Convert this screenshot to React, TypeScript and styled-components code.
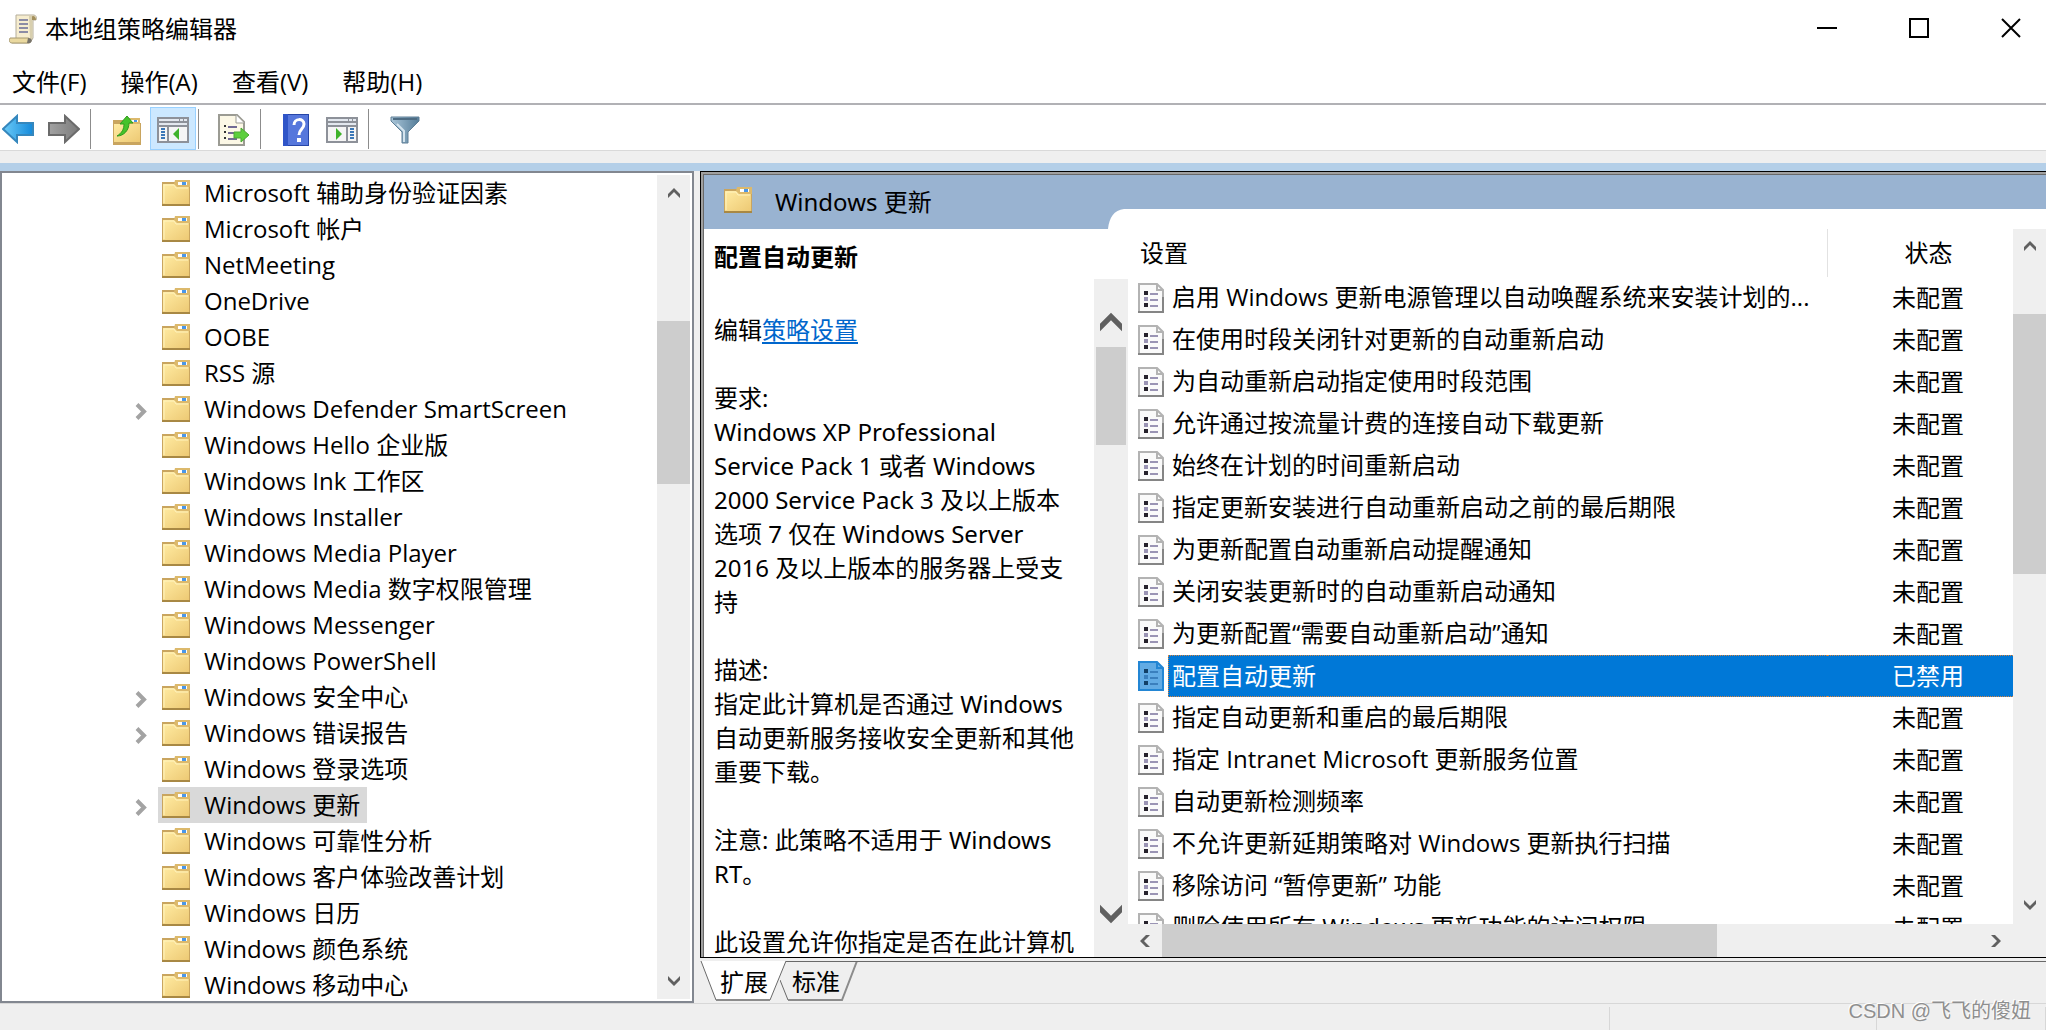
import React from 'react';
import styled, { createGlobalStyle, css } from 'styled-components';

const Global = createGlobalStyle`
  * { box-sizing: border-box; }
  body {
    margin: 0;
    background: #efefef;
    color: #000;
    font: 24px/34px "Open Sans", "Noto Sans CJK SC", sans-serif;
  }
  button {
    margin: 0;
    padding: 0;
    border: 0;
    background: none;
    color: inherit;
    font: inherit;
    white-space: nowrap;
  }
  svg { display: block; flex: none; }
`;

const Window = styled.div`
  display: flex;
  flex-direction: column;
  height: 100vh;
  min-height: 480px;
  overflow: hidden;
`;

const TitleBar = styled.header`
  display: flex;
  align-items: center;
  gap: 8px;
  flex: none;
  height: 60px;
  padding: 0 25px 2px 9px;
  background: #fff;
`;

const WindowTitle = styled.h1`
  flex: 1;
  margin: 0;
  font-size: 24px;
  font-weight: 400;
`;

const WindowControls = styled.div`
  display: flex;
  gap: 72px;
  padding-bottom: 3px;
`;

const MenuBar = styled.nav`
  display: flex;
  align-items: center;
  gap: 34px;
  flex: none;
  height: 43px;
  padding-left: 12px;
  background: #fff;
`;

const Toolbar = styled.div`
  display: flex;
  align-items: center;
  flex: none;
  height: 48px;
  border-top: 2px solid #b1b1b5;
  border-bottom: 1px solid #d9d9d9;
  background: #fff;
  padding-top: 2px;
`;

const NavGroup = styled.div`
  display: flex;
  gap: 10px;
`;

const NavButton = styled.button`
  display: grid;
  place-items: center;
  width: 36px;
  height: 43px;
`;

const ToolButton = styled.button<{ $active?: boolean }>`
  display: grid;
  place-items: center;
  width: 46px;
  height: 43px;
  padding-top: 2px;
  ${(p) => p.$active && css`
    background: #cce8ff;
    border: 1px solid #99d1ff;
  `}
`;

const Divider = styled.span<{ $before: number; $after: number }>`
  width: 1px;
  height: 40px;
  margin: 0 ${(p) => p.$after}px 0 ${(p) => p.$before}px;
  background: #8c8c8c;
`;

const BlueStrip = styled.div`
  flex: none;
  height: 20px;
  border-bottom: 8px solid #b4cfe8;
  background: #efefef;
`;

const Workspace = styled.main`
  display: grid;
  grid-template-columns: 694px minmax(0, 1fr);
  column-gap: 6px;
  flex: 1;
  min-height: 0;
`;

const TreePane = styled.section`
  display: flex;
  min-height: 0;
  padding: 2px 2px 2px 0;
  border: 2px solid #828790;
  background: #fff;
`;

const TreeList = styled.ul`
  flex: 1;
  min-width: 0;
  margin: 0;
  padding: 0 0 0 130px;
  list-style: none;
  overflow: hidden;
`;

const TreeItem = styled.li`
  display: flex;
  align-items: center;
  height: 36px;
`;

const Expander = styled.span`
  width: 26px;
  padding: 4px 0 0 3px;
`;

const TreeLabel = styled.button<{ $selected?: boolean }>`
  display: flex;
  align-items: center;
  gap: 14px;
  height: 36px;
  padding: 0 7px 0 4px;
  line-height: 28px;
  background: ${(p) => (p.$selected ? '#d9d9d9' : 'transparent')};
`;

const BarFrame = styled.div<{ $vertical?: boolean; $size: number; $start: number; $end: number }>`
  display: flex;
  flex: none;
  flex-direction: ${(p) => (p.$vertical ? 'column' : 'row')};
  ${(p) => (p.$vertical ? `width: ${p.$size}px; padding: ${p.$start}px 0 ${p.$end}px;` : `height: ${p.$size}px;`)}
  background: #efefef;
`;

const BarArrow = styled.button<{ $length: number }>`
  display: grid;
  place-items: center;
  flex: 0 0 ${(p) => p.$length}px;
`;

const BarSpace = styled.div<{ $grow: number }>`
  flex: ${(p) => p.$grow} 0 0;
`;

const BarThumb = styled(BarSpace)<{ $inset: number }>`
  margin: 0 ${(p) => p.$inset}px;
  background: #cdcdcd;
`;

const DetailPane = styled.section`
  display: flex;
  flex-direction: column;
  min-width: 0;
  min-height: 0;
`;

const DetailFrame = styled.div`
  display: flex;
  flex: 1;
  min-height: 0;
  border: solid #000;
  border-width: 1px 0 1px 1px;
`;

const DetailInner = styled.div`
  display: flex;
  flex: 1;
  flex-direction: column;
  min-width: 0;
  min-height: 0;
  border: solid #a0a0a0;
  border-width: 2px 0 0 2px;
`;

const DetailContent = styled.div`
  display: flex;
  flex: 1;
  flex-direction: column;
  min-height: 0;
  border: solid #696969;
  border-width: 1px 0 0 1px;
  background: #fff;
`;

const DetailHeader = styled.header`
  display: flex;
  align-items: flex-end;
  flex: none;
  height: 54px;
  background: #99b3d1;
`;

const DetailTitle = styled.h2`
  display: flex;
  align-items: center;
  gap: 23px;
  width: 404px;
  height: 54px;
  margin: 0;
  padding: 0 0 0 20px;
  font-family: "Noto Sans", "Noto Sans CJK SC", sans-serif;
  font-size: 24px;
  font-weight: 400;

  svg { margin-bottom: 4px; }
`;

const HeaderSheet = styled.div`
  flex: 1;
  height: 20px;
  background: #fff;
`;

const DetailBody = styled.div`
  display: grid;
  grid-template-columns: 424px minmax(0, 1fr);
  grid-template-rows: minmax(0, 1fr);
  flex: 1;
  min-height: 0;
`;

const Summary = styled.article`
  display: flex;
  flex-direction: column;
  min-height: 0;
  font-family: "Noto Sans", "Noto Sans CJK SC", sans-serif;
`;

const SummaryTitle = styled.h3`
  flex: none;
  height: 50px;
  margin: 0;
  padding: 11px 10px 0;
  font-size: 24px;
  line-height: 34px;
  font-weight: 700;
`;

const SummaryScroll = styled.div`
  display: flex;
  flex: 1;
  min-height: 0;
`;

const SummaryText = styled.div`
  flex: 1;
  min-width: 0;
  padding: 34px 18px 0 10px;
  overflow: hidden;

  p {
    margin: 0 0 34px;
    white-space: pre-line;
  }
  a {
    color: #0066cc;
    text-decoration-thickness: 2px;
    text-underline-offset: 3px;
  }
`;

const Listing = styled.div`
  display: flex;
  min-height: 0;
`;

const ListingMain = styled.div`
  display: flex;
  flex: 1;
  flex-direction: column;
  min-width: 0;
`;

const ListViewport = styled.div`
  flex: 1;
  min-height: 0;
  overflow: hidden;
`;

const PolicyTable = styled.table`
  table-layout: fixed;
  width: calc(100% + 16px);
  border-collapse: separate;
  border-spacing: 0;
`;

const HeadCell = styled.th<{ $status?: boolean }>`
  width: ${(p) => (p.$status ? '202px' : 'auto')};
  height: 48px;
  padding: ${(p) => (p.$status ? 0 : '0 0 0 12px')};
  border-left: ${(p) => (p.$status ? '1px solid #e2e2e2' : '0')};
  font-weight: 400;
  text-align: ${(p) => (p.$status ? 'center' : 'left')};
`;

const selectedCell = css`
  background: #0078d7;
  color: #fff;
  border: dotted #d9853f;
  border-width: 1px 0;
`;

const NameCell = styled.td`
  height: 42px;
  padding: 0 0 0 10px;
`;

const NameContent = styled.div`
  display: flex;
  align-items: center;
  gap: 4px;
`;

const NameText = styled.span<{ $selected?: boolean }>`
  flex: 1;
  height: 42px;
  padding-left: 4px;
  line-height: 40px;
  overflow: hidden;
  text-overflow: ellipsis;
  white-space: nowrap;
  ${(p) => p.$selected && css`
    ${selectedCell}
    border-left-width: 1px;
    padding-left: 3px;
  `}
`;

const StatusCell = styled.td<{ $selected?: boolean }>`
  height: 42px;
  padding: 0;
  line-height: 40px;
  text-align: center;
  ${(p) => p.$selected && selectedCell}
`;

const TabStrip = styled.div`
  display: flex;
  flex: none;
  height: 45px;
  padding-top: 3px;
`;

const Tab = styled.button<{ $second?: boolean }>`
  position: relative;
  width: ${(p) => (p.$second ? 78 : 80)}px;
  height: 42px;
  padding: ${(p) => (p.$second ? '0 18px 0 12px' : '0 12px 0 20px')};

  svg {
    position: absolute;
    top: 0;
    left: 0;
  }
  span {
    position: relative;
  }
`;

const TabLine = styled.div`
  flex: 1;
  border-top: 1px solid #696969;
`;

const StatusBar = styled.footer`
  display: flex;
  justify-content: flex-end;
  flex: none;
  height: 27px;
  padding-top: 3px;
  border-top: 1px solid #d7d7d7;
`;

const StatusSlot = styled.div<{ $width: number }>`
  position: relative;
  width: ${(p) => p.$width}px;
  border-left: 1px solid #d7d7d7;
`;

const Watermark = styled.span`
  position: absolute;
  right: 14px;
  top: -13px;
  color: #8f8f8f;
  font-family: "Liberation Sans", "Noto Sans CJK SC", sans-serif;
  font-size: 20px;
  line-height: 34px;
  white-space: nowrap;
  text-shadow: -1px -1px 0 #fff;
`;

function FolderIcon() {
  return (
    <svg width="28" height="26" viewBox="0 0 28 26" aria-hidden="true">
      <rect x="0" y="2" width="28" height="24" fill="#c9a55f" />
      <rect x="1" y="4" width="26" height="20" fill="url(#folderFill)" />
      <path d="M2 23V5h10l2 3h12" fill="none" stroke="#fff3bd" strokeWidth="1" />
      <path d="M13 0h15v7H15l-3-3z" fill="#dcb96c" />
      <rect x="16" y="2" width="9" height="3" fill="#fff" />
      <rect x="20" y="2" width="4" height="3" fill="#4a97e8" />
      <path d="M0 25h28" stroke="#a88844" strokeWidth="2" />
    </svg>
  );
}

function PolicyIcon({ selected }: { selected?: boolean }) {
  const page = selected ? '#62abe4' : '#fafafa';
  const edge = selected ? '#2386d4' : '#b3b3b3';
  const base = selected ? '#2386d4' : '#858585';
  const mark = selected ? '#123f66' : '#26222c';
  const line = selected ? '#3a7fbd' : '#9a94b4';
  return (
    <svg width="26" height="30" viewBox="0 0 26 30" aria-hidden="true">
      <path d="M1 1h18l6 6v22H1z" fill={page} stroke={edge} strokeWidth="2" />
      <path d="M19 1v6h6" fill="none" stroke={edge} strokeWidth="2" />
      <path d="M0 29h26M25 14v15" stroke={base} strokeWidth="2" />
      <path d="M6 8h4v4H6zM6 20h4v4H6z" fill={mark} />
      <path d="M6 14h4v4H6z" fill={line} />
      <path d="M12 11h8M12 17h8M12 23h8" stroke={line} strokeWidth="2" />
    </svg>
  );
}

type Direction = 'up' | 'down' | 'left' | 'right';
const turns: Record<Direction, number> = { up: 0, right: 90, down: 180, left: 270 };

function Chevron({ dir, size = 12 }: { dir: Direction; size?: number }) {
  return (
    <svg width={size} height={size} viewBox="0 0 12 12" aria-hidden="true">
      <path d="M0 7 6 1l6 6v4L6 5 0 11z" fill="#606060" transform={`rotate(${turns[dir]} 6 6)`} />
    </svg>
  );
}

function ExpandIcon() {
  return (
    <svg width="12" height="17" viewBox="0 0 12 17" aria-hidden="true">
      <path d="M2 1.500 9 8.500 2 15.500" fill="none" stroke="#a3a3a3" strokeWidth="4" />
    </svg>
  );
}

interface ScrollBarProps {
  vertical?: boolean;
  size: number;
  arrow: number;
  before: number;
  thumb: number;
  after: number;
  start?: number;
  end?: number;
  inset?: number;
  glyph?: number;
}

function ScrollBar({ vertical, size, arrow, before, thumb, after, start = 0, end = 0, inset = 0, glyph }: ScrollBarProps) {
  return (
    <BarFrame $vertical={vertical} $size={size} $start={start} $end={end}>
      <BarArrow $length={arrow} aria-label={vertical ? '向上滚动' : '向左滚动'}>
        <Chevron dir={vertical ? 'up' : 'left'} size={glyph} />
      </BarArrow>
      <BarSpace $grow={before} />
      <BarThumb $grow={thumb} $inset={inset} />
      <BarSpace $grow={after} />
      <BarArrow $length={arrow} aria-label={vertical ? '向下滚动' : '向右滚动'}>
        <Chevron dir={vertical ? 'down' : 'right'} size={glyph} />
      </BarArrow>
    </BarFrame>
  );
}

function ScrollIcon() {
  return (
    <svg width="28" height="30" viewBox="0 0 28 30" aria-hidden="true">
      <path d="M7 1h17c3 0 4 2 3 5h-3v18l-3 5H3l4-5z" fill="#f6edcf" stroke="#b5ae9b" />
      <path d="M22 3c2-2 5-1 5 3h-4z" fill="#a38f5c" />
      <path d="M20 2h3v23h-2z" fill="#d8cfae" />
      <path d="M10 6h9M10 10h9M10 14h9M10 18h9" stroke="#8c8ca5" strokeWidth="2" />
      <path d="M1 24h18c2 0 3 2 1 5H3c-3 0-3-3-2-5z" fill="#ead9a0" stroke="#a89a70" />
      <path d="M19 24c4 0 5 3 2 5h-3z" fill="#77736a" />
    </svg>
  );
}

function ArrowIcon({ forward }: { forward?: boolean }) {
  return (
    <svg width="32" height="30" viewBox="0 0 32 30" aria-hidden="true">
      <path
        d="M1 15 15 2v7h16v12H15v7z"
        fill={forward ? 'url(#grayArrow)' : 'url(#blueArrow)'}
        stroke={forward ? '#6b6b6b' : '#3587bd'}
        strokeWidth="2"
        transform={forward ? 'matrix(-1 0 0 1 32 0)' : undefined}
      />
    </svg>
  );
}

function UpFolderIcon() {
  return (
    <svg width="28" height="30" viewBox="0 0 28 30" aria-hidden="true">
      <path d="M0 5h10l3 3h15v22H0z" fill="#c9a55f" />
      <path d="M15 3h12v6H15z" fill="#dcb96c" />
      <path d="M18 5h7v2h-7z" fill="#fff" />
      <path d="M21 5h3v2h-3z" fill="#4a97e8" />
      <path d="M1 9h26v18H1z" fill="url(#folderFill)" />
      <path d="M4 21c5-3 7-7 7-12H7l7-8 6 7h-4c0 7-5 13-12 13z" fill="#45c32b" stroke="#2f9a1d" />
    </svg>
  );
}

function PaneIcon({ mirrored }: { mirrored?: boolean }) {
  return (
    <svg width="32" height="26" viewBox="0 0 32 26" aria-hidden="true">
      <rect width="32" height="26" fill="#8d9199" />
      <path d="M2 2h20v2H2zM23 2h3v2h-3zM27 2h3v2h-3zM2 6h28v2H2z" fill="#e3e8ef" />
      <rect x="2" y="10" width="28" height="14" fill="#f5f5f5" />
      <g transform={mirrored ? 'matrix(-1 0 0 1 32 0)' : undefined}>
        <path d="M10 10h2v14h-2z" fill="#8d9199" />
        <path d="M4 12h4M4 15h4M4 18h4M4 21h4" stroke="#3c78b8" strokeWidth="2" />
        <path d="M22 11v12l-6-6z" fill="#3fb32b" />
      </g>
    </svg>
  );
}

function ExportIcon() {
  return (
    <svg width="32" height="32" viewBox="0 0 32 32" aria-hidden="true">
      <path d="M1 1h18l7 7v23H1z" fill="#fcf8e6" stroke="#9b9b93" strokeWidth="2" />
      <path d="M18 1v8h8" fill="#fff" stroke="#9b9b93" />
      <path d="M6 12h2M6 18h2M6 24h2" stroke="#333" strokeWidth="2" />
      <path d="M10 13h9M10 19h6M10 25h9" stroke="#716a94" strokeWidth="2" />
      <path d="M16 18h7v-4l8 7-8 7v-4h-7z" fill="#5ccf3d" stroke="#4aa934" />
    </svg>
  );
}

function HelpIcon() {
  return (
    <svg width="26" height="32" viewBox="0 0 26 32" aria-hidden="true">
      <rect width="26" height="32" fill="#2746a8" />
      <rect x="5" y="1" width="20" height="30" fill="#5677dc" />
      <path d="M0 0h5v32H0z" fill="#2f55c8" />
      <path d="M11 11c0-7 10-7 10-1 0 5-5 5-5 11" fill="none" stroke="#fff" strokeWidth="3" />
      <rect x="14" y="24" width="4" height="4" fill="#fff" />
    </svg>
  );
}

function FilterIcon() {
  return (
    <svg width="30" height="28" viewBox="0 0 30 28" aria-hidden="true">
      <path d="M1 1h28v4L18 16v11h-6V16L1 5z" fill="url(#funnel)" stroke="#5f7f96" strokeWidth="1" />
      <path d="M3 3h24" stroke="#4e6c83" strokeWidth="2" />
      <path d="m7 8 7 7v11" fill="none" stroke="#d4e4ee" strokeWidth="2" />
    </svg>
  );
}

const HiddenSvg = styled.svg`
  position: absolute;
`;

function Gradients() {
  return (
    <HiddenSvg width="0" height="0" aria-hidden="true">
      <defs>
        <linearGradient id="folderFill" x1="0" y1="0" x2="1" y2="1">
          <stop offset="0" stopColor="#ffeba2" />
          <stop offset="1" stopColor="#edc974" />
        </linearGradient>
        <linearGradient id="blueArrow" x1="0" y1="0" x2="1" y2="0">
          <stop offset="0" stopColor="#6ccbf8" />
          <stop offset="1" stopColor="#1389da" />
        </linearGradient>
        <linearGradient id="grayArrow" x1="0" y1="0" x2="1" y2="0">
          <stop offset="0" stopColor="#7b7b7b" />
          <stop offset="1" stopColor="#a2a2a2" />
        </linearGradient>
        <linearGradient id="funnel" x1="0" y1="0" x2="1" y2="0">
          <stop offset="0" stopColor="#a9c5d8" />
          <stop offset="1" stopColor="#557d99" />
        </linearGradient>
      </defs>
    </HiddenSvg>
  );
}

const menus = ['文件(F)', '操作(A)', '查看(V)', '帮助(H)'];

const folders: { name: string; expandable?: boolean; selected?: boolean }[] = [
  { name: 'Microsoft 辅助身份验证因素' },
  { name: 'Microsoft 帐户' },
  { name: 'NetMeeting' },
  { name: 'OneDrive' },
  { name: 'OOBE' },
  { name: 'RSS 源' },
  { name: 'Windows Defender SmartScreen', expandable: true },
  { name: 'Windows Hello 企业版' },
  { name: 'Windows Ink 工作区' },
  { name: 'Windows Installer' },
  { name: 'Windows Media Player' },
  { name: 'Windows Media 数字权限管理' },
  { name: 'Windows Messenger' },
  { name: 'Windows PowerShell' },
  { name: 'Windows 安全中心', expandable: true },
  { name: 'Windows 错误报告', expandable: true },
  { name: 'Windows 登录选项' },
  { name: 'Windows 更新', expandable: true, selected: true },
  { name: 'Windows 可靠性分析' },
  { name: 'Windows 客户体验改善计划' },
  { name: 'Windows 日历' },
  { name: 'Windows 颜色系统' },
  { name: 'Windows 移动中心' },
];

const policies: { name: string; status: string; selected?: boolean }[] = [
  { name: '启用 Windows 更新电源管理以自动唤醒系统来安装计划的...', status: '未配置' },
  { name: '在使用时段关闭针对更新的自动重新启动', status: '未配置' },
  { name: '为自动重新启动指定使用时段范围', status: '未配置' },
  { name: '允许通过按流量计费的连接自动下载更新', status: '未配置' },
  { name: '始终在计划的时间重新启动', status: '未配置' },
  { name: '指定更新安装进行自动重新启动之前的最后期限', status: '未配置' },
  { name: '为更新配置自动重新启动提醒通知', status: '未配置' },
  { name: '关闭安装更新时的自动重新启动通知', status: '未配置' },
  { name: '为更新配置“需要自动重新启动”通知', status: '未配置' },
  { name: '配置自动更新', status: '已禁用', selected: true },
  { name: '指定自动更新和重启的最后期限', status: '未配置' },
  { name: '指定 Intranet Microsoft 更新服务位置', status: '未配置' },
  { name: '自动更新检测频率', status: '未配置' },
  { name: '不允许更新延期策略对 Windows 更新执行扫描', status: '未配置' },
  { name: '移除访问 “暂停更新” 功能', status: '未配置' },
  { name: '删除使用所有 Windows 更新功能的访问权限', status: '未配置' },
];

const paragraphs = [
  '要求:\nWindows XP Professional Service Pack 1 或者 Windows 2000 Service Pack 3 及以上版本\n选项 7 仅在 Windows Server 2016 及以上版本的服务器上受支持',
  '描述:\n指定此计算机是否通过 Windows 自动更新服务接收安全更新和其他重要下载。',
  '注意: 此策略不适用于 Windows RT。',
  '此设置允许你指定是否在此计算机',
];

export default function App() {
  return (
    <Window lang="zh-CN">
      <Global />
      <Gradients />
      <TitleBar>
        <ScrollIcon />
        <WindowTitle>本地组策略编辑器</WindowTitle>
        <WindowControls>
          <button aria-label="最小化">
            <svg width="20" height="20"><path d="M0 10h20" stroke="#000" strokeWidth="2" /></svg>
          </button>
          <button aria-label="最大化">
            <svg width="20" height="20"><path d="M1 1h18v18H1z" fill="none" stroke="#000" strokeWidth="2" /></svg>
          </button>
          <button aria-label="关闭">
            <svg width="20" height="20"><path d="m1 1 18 18M19 1 1 19" stroke="#000" strokeWidth="2" /></svg>
          </button>
        </WindowControls>
      </TitleBar>
      <MenuBar>
        {menus.map((menu) => <button key={menu}>{menu}</button>)}
      </MenuBar>
      <Toolbar role="toolbar">
        <NavGroup>
          <NavButton aria-label="后退"><ArrowIcon /></NavButton>
          <NavButton aria-label="前进"><ArrowIcon forward /></NavButton>
        </NavGroup>
        <Divider $before={8} $after={13} />
        <ToolButton aria-label="上一级"><UpFolderIcon /></ToolButton>
        <ToolButton $active aria-label="显示控制台树"><PaneIcon /></ToolButton>
        <Divider $before={2} $after={12} />
        <ToolButton aria-label="导出列表"><ExportIcon /></ToolButton>
        <Divider $before={3} $after={12} />
        <ToolButton aria-label="帮助"><HelpIcon /></ToolButton>
        <ToolButton aria-label="显示操作窗格"><PaneIcon mirrored /></ToolButton>
        <Divider $before={3} $after={13} />
        <ToolButton aria-label="筛选器"><FilterIcon /></ToolButton>
      </Toolbar>
      <BlueStrip />

      <Workspace>
        <TreePane>
          <TreeList>
            {folders.map((folder) => (
              <TreeItem key={folder.name}>
                <Expander>{folder.expandable && <ExpandIcon />}</Expander>
                <TreeLabel $selected={folder.selected}>
                  <FolderIcon />
                  {folder.name}
                </TreeLabel>
              </TreeItem>
            ))}
          </TreeList>
          <ScrollBar vertical size={33} arrow={36} before={110} thumb={163} after={479} />
        </TreePane>

        <DetailPane>
          <DetailFrame>
            <DetailInner>
              <DetailContent>
                <DetailHeader>
                  <DetailTitle><FolderIcon />Windows 更新</DetailTitle>
                  <svg width="16" height="20" aria-hidden="true"><path d="M0 20C1 9 6 1 16 0v20z" fill="#fff" /></svg>
                  <HeaderSheet />
                </DetailHeader>
                <DetailBody>
                  <Summary>
                    <SummaryTitle>配置自动更新</SummaryTitle>
                    <SummaryScroll>
                      <SummaryText>
                        <p>编辑<a href="#policy">策略设置</a></p>
                        {paragraphs.map((text) => <p key={text}>{text}</p>)}
                      </SummaryText>
                      <ScrollBar vertical size={34} arrow={50} before={0} thumb={98} after={444} start={18} end={18} inset={2} glyph={22} />
                    </SummaryScroll>
                  </Summary>
                  <Listing>
                    <ListingMain>
                      <ListViewport>
                        <PolicyTable>
                          <thead>
                            <tr>
                              <HeadCell>设置</HeadCell>
                              <HeadCell $status>状态</HeadCell>
                            </tr>
                          </thead>
                          <tbody>
                            {policies.map((policy) => (
                              <tr key={policy.name}>
                                <NameCell>
                                  <NameContent>
                                    <PolicyIcon selected={policy.selected} />
                                    <NameText $selected={policy.selected}>{policy.name}</NameText>
                                  </NameContent>
                                </NameCell>
                                <StatusCell $selected={policy.selected}>{policy.status}</StatusCell>
                              </tr>
                            ))}
                          </tbody>
                        </PolicyTable>
                      </ListViewport>
                      <ScrollBar size={33} arrow={34} before={0} thumb={554} after={262} />
                    </ListingMain>
                    <ScrollBar vertical size={33} arrow={34} before={51} thumb={260} after={314} end={35} />
                  </Listing>
                </DetailBody>
              </DetailContent>
            </DetailInner>
          </DetailFrame>
          <TabStrip>
            <Tab>
              <svg width="88" height="42" aria-hidden="true">
                <path d="M1 0 16 39h54L86 0z" fill="#fff" />
                <path d="M1 0 16 39M70 39 86 0" stroke="#696969" strokeWidth="1" fill="none" />
                <path d="M16 39h54" stroke="#8c8c8c" strokeWidth="2" />
              </svg>
              <span>扩展</span>
            </Tab>
            <Tab $second>
              <svg width="78" height="42" aria-hidden="true">
                <path d="M0 19 8 39" stroke="#696969" fill="none" />
                <path d="M8 39h54L77 0" stroke="#8c8c8c" strokeWidth="2" fill="none" />
                <path d="M6 0h72" stroke="#696969" strokeWidth="2" />
              </svg>
              <span>标准</span>
            </Tab>
            <TabLine />
          </TabStrip>
        </DetailPane>
      </Workspace>

      <StatusBar>
        <StatusSlot $width={267} />
        <StatusSlot $width={169}>
          <Watermark>CSDN @飞飞的傻妞</Watermark>
        </StatusSlot>
        <StatusSlot $width={1} />
      </StatusBar>
    </Window>
  );
}
